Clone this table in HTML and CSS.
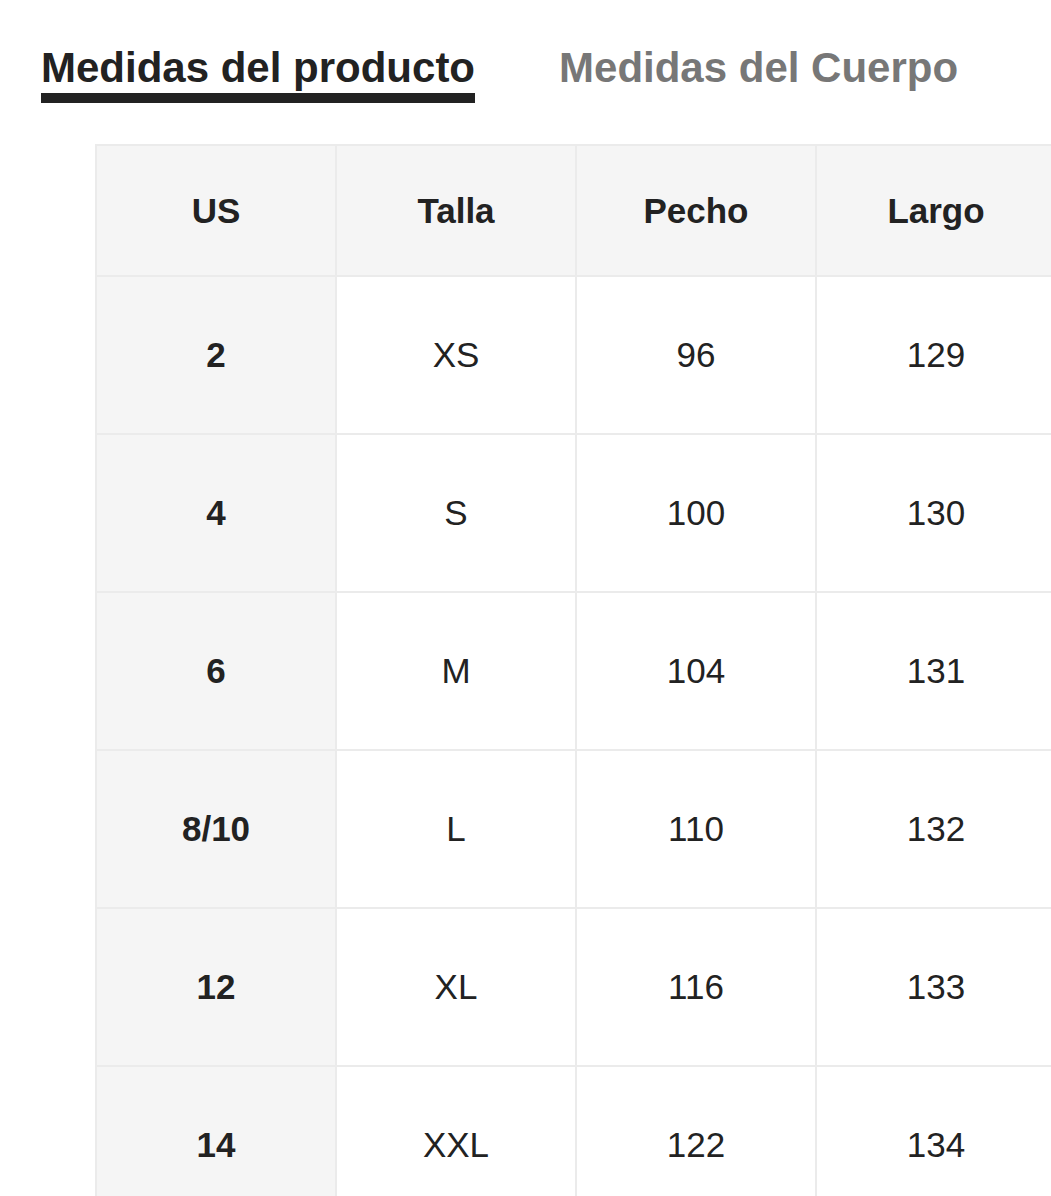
FILE: index.html
```html
<!DOCTYPE html>
<html lang="es">
<head>
<meta charset="utf-8">
<title>Medidas</title>
<link rel="stylesheet" href="styles.css">
</head>
<body>
<div class="page">
  <div class="tabs">
    <div class="tab active">Medidas del producto</div>
    <div class="tab">Medidas del Cuerpo</div>
  </div>
  <div class="table-wrap">
    <table class="size-table">
      <colgroup><col><col><col><col></colgroup>
      <thead>
        <tr><th>US</th><th>Talla</th><th>Pecho</th><th>Largo</th></tr>
      </thead>
      <tbody>
        <tr><td class="us">2</td><td>XS</td><td>96</td><td>129</td></tr>
        <tr><td class="us">4</td><td>S</td><td>100</td><td>130</td></tr>
        <tr><td class="us">6</td><td>M</td><td>104</td><td>131</td></tr>
        <tr><td class="us">8/10</td><td>L</td><td>110</td><td>132</td></tr>
        <tr><td class="us">12</td><td>XL</td><td>116</td><td>133</td></tr>
        <tr><td class="us">14</td><td>XXL</td><td>122</td><td>134</td></tr>
      </tbody>
    </table>
  </div>
</div>
</body>
</html>
```
FILE: styles.css
```css
html, body {
  margin: 0;
  padding: 0;
  background: #fff;
  overflow: hidden;
}
.page {
  width: 1051px;
  height: 1196px;
  overflow: hidden;
  font-family: "Liberation Sans", Arial, sans-serif;
  color: #222;
}
.tabs {
  display: flex;
  gap: 84px;
  padding: 44px 0 0 41px;
}
.tab {
  font-size: 42px;
  font-weight: bold;
  line-height: 47px;
  color: #777;
  padding-bottom: 2px;
  border-bottom: 10px solid transparent;
}
.tab.active {
  color: #222;
  border-bottom-color: #222;
}
.table-wrap {
  margin-top: 41px;
  padding-left: 95px;
}
.size-table {
  border-collapse: collapse;
  table-layout: fixed;
  width: 962px;
  font-size: 35px;
}
.size-table col { width: 240px; }
.size-table th,
.size-table td {
  border: 2px solid #ebebeb;
  text-align: center;
  vertical-align: middle;
  padding: 0;
}
.size-table th {
  background: #f5f5f5;
  font-weight: bold;
  height: 129px;
}
.size-table td {
  height: 156px;
  font-weight: normal;
}
.size-table td.us {
  background: #f5f5f5;
  font-weight: bold;
}
```
